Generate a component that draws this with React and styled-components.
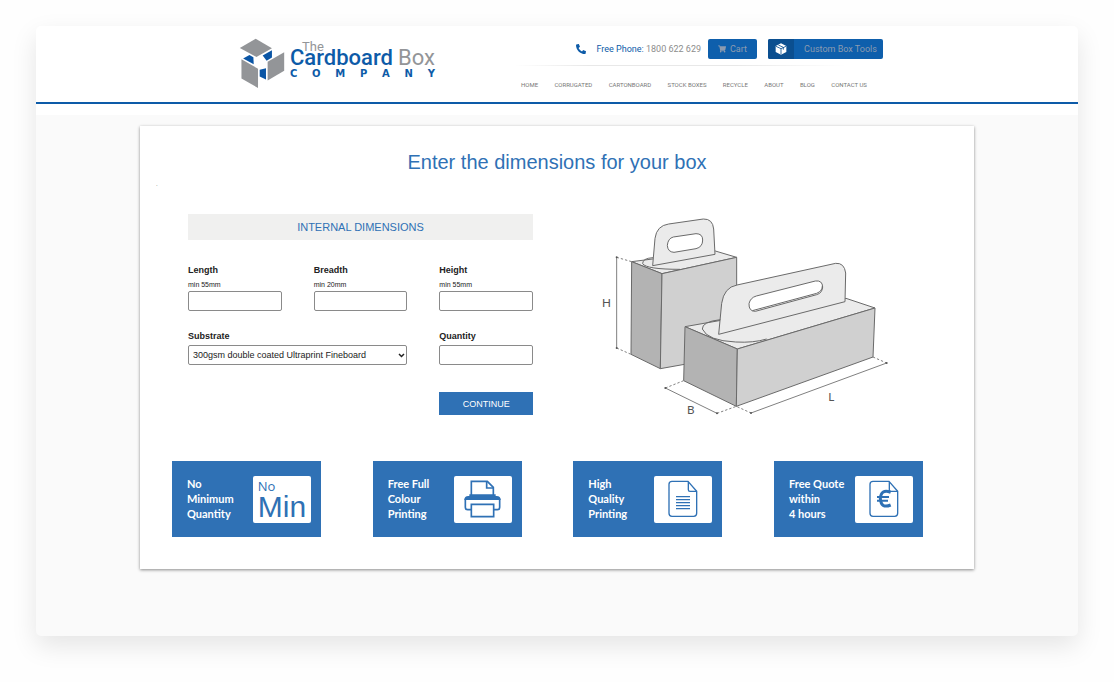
import React, {useState} from "react";
import styled, {createGlobalStyle} from "styled-components";
import {FaPhone, FaShoppingCart} from "react-icons/fa";

const BLUE = '#2f71b5';
const BRAND = '#0d5ba8';

const GlobalStyle = createGlobalStyle`
    * {
        box-sizing: border-box;
    }
    body {
        margin: 0;
        background: #fefefe;
        font-family: "Liberation Sans", Arial, sans-serif;
        color: #222;
    }
`;

const Page = styled.div`
    padding: 26px 36px 46px;
`;

const Window = styled.div`
    background: #fafafa;
    border-radius: 5px;
    overflow: hidden;
    box-shadow: 0 10px 26px rgba(0, 0, 0, 0.1);
`;

const Header = styled.header`
    background: white;
    border-bottom: 2px solid ${BRAND};
`;

const HeaderInner = styled.div`
    display: flex;
    justify-content: space-between;
    max-width: 652px;
    margin: 0 auto;
    padding: 12px 0 12px 8px;
    font-family: Roboto, sans-serif;
`;

const Logo = styled.a`
    display: flex;
    gap: 5px;
    text-decoration: none;

    & svg {
        width: 46px;
        height: 51px;
    }
`;

const Wordmark = styled.div`
    width: 145px;
    padding-top: 3px;
    color: #939598;
`;

// "The" tucks in over the ascenders of the line below
const The = styled.div`
    margin: 0 0 -4px 12px;
    font-size: 13px;
    line-height: 12px;
`;

const CompanyName = styled.div`
    display: flex;
    justify-content: space-between;
    font-size: 22px;
    line-height: 18px;

    & b {
        font-weight: 500;
        color: ${BRAND};
    }
`;

const Spread = styled.div`
    display: flex;
    justify-content: space-between;
    font-family: "DejaVu Sans", sans-serif;
    font-size: 10px;
    font-weight: 700;
    line-height: 13px;
    color: ${BRAND};
`;

const HeaderSide = styled.div`
    display: flex;
    flex-direction: column;
    width: 369px;
`;

const Contact = styled.div`
    display: flex;
    align-items: center;
    justify-content: flex-end;
    height: 20px;
    margin-top: 1px;
`;

const Phone = styled.a`
    display: flex;
    align-items: center;
    margin-right: 7px;
    font-size: 9px;
    color: #8d8d8d;
    text-decoration: none;
    white-space: pre;

    & svg {
        margin-right: 10px;
        color: ${BRAND};
    }
    & b {
        font-weight: 400;
        color: ${BRAND};
    }
`;

const HeaderButton = styled.button`
    display: flex;
    align-items: center;
    justify-content: center;
    gap: 4px;
    width: ${props => props.$width};
    height: 20px;
    margin: 0 0 0 ${props => props.$gap || 0};
    padding: 0;
    overflow: hidden;
    border: 0;
    border-radius: 2px;
    background: #0e5fac;
    color: #8c9bb0;
    font: 9px Roboto, sans-serif;
    cursor: pointer;
`;

const ButtonIcon = styled.span`
    display: flex;
    align-items: center;
    justify-content: center;
    width: 26px;
    height: 20px;
    background: #0b4f90;
`;

const ButtonText = styled.span`
    flex: 1;
    text-align: center;
`;

const Divider = styled.hr`
    width: 100%;
    height: 1px;
    margin: 6px 0 0;
    border: 0;
    background: linear-gradient(90deg, transparent, #e8e8e8 20%, #e8e8e8 60%, transparent 90%);
`;

const Nav = styled.nav`
    display: flex;
    justify-content: space-between;
    padding: 14px 16px 0 7px;

    & a {
        font-size: 6px;
        line-height: 10px;
        color: #777;
        text-decoration: none;
        white-space: nowrap;
    }
`;

const Strip = styled.div`
    height: 11px;
    background: white;
`;

const Card = styled.main`
    max-width: 834px;
    margin: 11px auto 67px;
    padding: 24px 0 32px;
    background: white;
    box-shadow: 0 1px 3px rgba(0, 0, 0, 0.45);
`;

const Title = styled.h1`
    margin: 0;
    font-size: 20px;
    font-weight: 400;
    line-height: 24px;
    text-align: center;
    color: ${BLUE};
`;

const Note = styled.p`
    margin: 4px 16px 0;
    font-size: 6px;
    line-height: 12px;
    color: #555;
`;

const Content = styled.div`
    display: flex;
    align-items: flex-start;
    gap: 57px;
    padding: 15px 48px 0;
`;

const Form = styled.form`
    flex: 0 1 345px;
    padding-top: 9px;
`;

const FormHeading = styled.h2`
    margin: 0 0 24px;
    background: #f0f0ef;
    font-size: 11px;
    font-weight: 400;
    line-height: 26px;
    text-align: center;
    color: ${BLUE};
`;

const Fields = styled.div`
    display: grid;
    grid-template-columns: repeat(3, 1fr);
    gap: 19px 32px;
`;

const Field = styled.div`
    display: flex;
    flex-direction: column;
    grid-column: span ${props => props.$span || 1};
`;

const Label = styled.label`
    margin-bottom: 3px;
    font-size: 9px;
    font-weight: 700;
    line-height: 12px;
`;

const Hint = styled.small`
    font-size: 7px;
    line-height: 12px;
`;

const Input = styled.input`
    width: 100%;
    height: 20px;
    padding: 0 5px;
    border: 1px solid #8a8a8a;
    border-radius: 2px;
    background: white;
    font: 9px "Liberation Sans", Arial, sans-serif;
`;

const SelectBox = styled.div`
    display: grid;
    align-items: center;

    & > * {
        grid-area: 1 / 1;
    }
    & svg {
        justify-self: end;
        margin-right: 2px;
        pointer-events: none;
    }
`;

const Select = styled.select`
    appearance: none;
    width: 100%;
    height: 20px;
    padding: 0 4px;
    border: 1px solid #8a8a8a;
    border-radius: 2px;
    background: white;
    font: 9px "Liberation Sans", Arial, sans-serif;
    color: #222;
`;

const Continue = styled.button`
    grid-column: 3;
    height: 23px;
    margin-top: 8px;
    padding: 0;
    border: 0;
    background: ${BLUE};
    color: white;
    font: 9px "Liberation Sans", Arial, sans-serif;
    cursor: pointer;
`;

const Drawing = styled.svg`
    flex: 0 1 310px;
    min-width: 0;
    font-family: Lato, sans-serif;
`;

const Benefits = styled.ul`
    display: flex;
    justify-content: space-between;
    margin: 36px 0 0;
    padding: 0 51px 0 32px;
    list-style: none;
`;

const Benefit = styled.li`
    display: flex;
    align-items: center;
    justify-content: space-between;
    width: 149px;
    height: 76px;
    padding: 0 10px 0 15px;
    background: ${BLUE};
    color: white;
    font-family: Lato, sans-serif;
    font-size: 11px;
    font-weight: 700;
    line-height: 15px;
    white-space: pre;
`;

const BenefitText = styled.span`
    padding-bottom: 2px;
`;

const Badge = styled.div`
    display: flex;
    align-items: center;
    justify-content: center;
    width: 58px;
    height: 47px;
    border-radius: 2px;
    background: white;
    color: ${BLUE};
`;

const NoMin = styled.div`
    font-family: "Liberation Sans", Arial, sans-serif;
    font-size: 30px;
    font-weight: 400;
    line-height: 27px;

    & small {
        display: block;
        font-family: "Open Sans", sans-serif;
        font-size: 13px;
        line-height: 14px;
    }
`;

const LogoMark = () => (
    <svg viewBox="22 18 138 154">
        <g fill="#939598">
            <path d="M24 48 L72 20 L121 49 L74 75 Z" />
            <path d="M29 82 L79 111 V169 L29 140 Z" />
            <path d="M158 61 V117 L108 146 V90 Z" />
        </g>
        <g fill="#0a55a5">
            <path d="M34 80 L53 69 L65 76 L66 97 Z" />
            <path d="M93 71 L121 55 V77 L105 87 Z" />
            <path d="M84 114 L103 109 V143 L84 134 Z" />
        </g>
    </svg>
);

const BoxIcon = () => (
    <svg width="12" height="12" viewBox="0 0 36 36">
        <path d="M18 1 L34 9 V27 L18 35 L2 27 V9 Z" fill="white" />
        <path d="M3 10 L18 17 L33 10 M18 17 V34 M10 6 L25 13 V20" fill="none" stroke="#0b4f90" strokeWidth="2.5" />
    </svg>
);

const Chevron = () => (
    <svg width="7" height="5" viewBox="0 0 14 10" fill="none" stroke="#222" strokeWidth="3">
        <path d="M2 2 L7 7 L12 2" />
    </svg>
);

const PrinterIcon = () => (
    <svg width="37" height="38" viewBox="0 0 111 114" fill="none" stroke={BLUE} strokeWidth="5">
        <path d="M22 48 V4 H70 L88 22 V48 Z" fill="white" />
        <path d="M68 5 V24 H87" />
        <path d="M16 43 H95 V48 H98 Q110 48 110 60 H1 Q1 48 13 48 H16 Z" fill={BLUE} stroke="none" />
        <path d="M4 56 V82 Q4 89 11 89 H22 M107 56 V82 Q107 89 100 89 H89" />
        <path d="M22 73 H89 V110 H22 Z" fill="white" />
    </svg>
);

const DocumentIcon = ({children}) => (
    <svg width="30" height="38" viewBox="0 0 90 114" fill="none" stroke={BLUE} strokeWidth="4">
        <path d="M12 4 H60 L86 34 V100 Q86 109 77 109 H12 Q3 109 3 100 V13 Q3 4 12 4 Z" />
        <path d="M61 5 V29 Q61 34 66 34 H86" />
        {children}
    </svg>
);

const EuroMark = () => (
    <g strokeWidth="9">
        <path d="M65 37 Q36 26 34 56 Q36 87 65 75" />
        <path d="M24 51 H60 M24 62 H57" strokeWidth="6" />
    </g>
);

const BoxDrawing = () => (
    <Drawing viewBox="0 0 930 660" role="img" aria-label="Box dimensions: height, breadth and length">
        <g stroke="#6a6a6a" strokeWidth="3" strokeLinejoin="round">
            <path d="M125 170 L376 138 L440 157 L216 206 Z" fill="#ebebeb" />
            <path d="M125 170 L216 206 L211 491 L123 448 Z" fill="#b3b3b3" />
            <path d="M216 206 L440 157 V450 L211 491 Z" fill="#d0d0d0" />
            <path d="M188 182 L195 100 Q200 62 236 57 L340 42 Q368 41 371 72 L375 148 Z" fill="#ebebeb" />
            <path d="M250 96 L318 86 Q338 86 338 105 Q338 126 318 131 L252 142 Q233 141 232 121 Q234 100 250 96 Z" fill="white" />
            <path d="M189 158 Q157 160 158 176 Q169 193 270 193" fill="none" />

            <path d="M285 365 L768 280 L855 309 L442 432 Z" fill="#ebebeb" />
            <path d="M285 365 L442 432 L439 604 L281 527 Z" fill="#b3b3b3" />
            <path d="M442 432 L855 309 L849 456 L439 604 Z" fill="#d0d0d0" />
            <path d="M386 388 L395 295 Q402 247 441 240 L737 175 Q763 173 767 204 L765 290 Z" fill="#ebebeb" />
            <path d="M499 273 L676 228 Q697 225 698 246 Q697 264 680 269 L496 319 Q476 319 477 296 Q481 278 499 273 Z" fill="white" />
            <path d="M487 317 L680 265 Q697 258 697 243" fill="none" />
            <path d="M391 344 Q336 350 337 372 Q352 407 437 411 Q490 414 530 402" fill="none" />
        </g>
        <g stroke="#808080" strokeWidth="3" fill="none">
            <path d="M80 157 V429 M226 549 L381 625 M483 624 L890 474" />
            <path d="M80 157 L125 170 M80 429 L123 448 M226 549 L281 527 M381 625 L439 604 L483 624 M849 456 L890 474" strokeDasharray="7 6" />
        </g>
        <g fill="#555">
            <circle cx="80" cy="157" r="3" />
            <circle cx="80" cy="429" r="3" />
            <circle cx="226" cy="549" r="3" />
            <circle cx="381" cy="625" r="3" />
            <circle cx="483" cy="624" r="3" />
            <circle cx="890" cy="474" r="3" />
        </g>
        <g fill="#555" fontSize="35" textAnchor="middle">
            <text x="49" y="305">H</text>
            <text x="302" y="626">B</text>
            <text x="724" y="588">L</text>
        </g>
    </Drawing>
);

const links = ['HOME', 'CORRUGATED', 'CARTONBOARD', 'STOCK BOXES', 'RECYCLE', 'ABOUT', 'BLOG', 'CONTACT US'];

const dimensions = [
    {id: 'length', label: 'Length', hint: 'min 55mm'},
    {id: 'breadth', label: 'Breadth', hint: 'min 20mm'},
    {id: 'height', label: 'Height', hint: 'min 55mm'},
];

const benefits = [
    {text: 'No\nMinimum\nQuantity', icon: <NoMin><small>No</small>Min</NoMin>},
    {text: 'Free Full\nColour\nPrinting', icon: <PrinterIcon />},
    {
        text: 'High\nQuality\nPrinting',
        icon: <DocumentIcon><path d="M24 50 H66 M24 59 H66 M24 68 H66 M24 77 H66 M24 86 H66" /></DocumentIcon>,
    },
    {text: 'Free Quote\nwithin\n4 hours', icon: <DocumentIcon><EuroMark /></DocumentIcon>},
];

const SiteHeader = () => (
    <Header>
        <HeaderInner>
            <Logo href="#">
                <LogoMark />
                <Wordmark>
                    <The>The</The>
                    <CompanyName><b>Cardboard</b><span>Box</span></CompanyName>
                    <Spread>
                        {'COMPANY'.split('').map(v => <span key={v}>{v}</span>)}
                    </Spread>
                </Wordmark>
            </Logo>
            <HeaderSide>
                <Contact>
                    <Phone href="tel:1800622629">
                        <FaPhone size={10} style={{transform: 'scaleX(-1)'}} />
                        <b>Free Phone: </b>1800 622 629
                    </Phone>
                    <HeaderButton type="button" $width="49px"><FaShoppingCart size={8} />Cart</HeaderButton>
                    <HeaderButton type="button" $width="115px" $gap="11px">
                        <ButtonIcon><BoxIcon /></ButtonIcon>
                        <ButtonText>Custom Box Tools</ButtonText>
                    </HeaderButton>
                </Contact>
                <Divider />
                <Nav>
                    {links.map(v => <a key={v} href="#">{v}</a>)}
                </Nav>
            </HeaderSide>
        </HeaderInner>
    </Header>
);

const App = () => {
    const [values, setValues] = useState({length: '', breadth: '', height: '', quantity: ''});
    const onChange = e => setValues({...values, [e.target.id]: e.target.value});

    return (
        <Page>
            <GlobalStyle />
            <Window>
                <SiteHeader />
                <Strip />
                <Card>
                    <Title>Enter the dimensions for your box</Title>
                    <Note>.</Note>
                    <Content>
                        <Form onSubmit={e => e.preventDefault()}>
                            <FormHeading>INTERNAL DIMENSIONS</FormHeading>
                            <Fields>
                                {dimensions.map(v => (
                                    <Field key={v.id}>
                                        <Label htmlFor={v.id}>{v.label}</Label>
                                        <Hint>{v.hint}</Hint>
                                        <Input id={v.id} value={values[v.id]} onChange={onChange} />
                                    </Field>
                                ))}
                                <Field $span={2}>
                                    <Label htmlFor="substrate">Substrate</Label>
                                    <SelectBox>
                                        <Select id="substrate">
                                            <option>300gsm double coated Ultraprint Fineboard</option>
                                        </Select>
                                        <Chevron />
                                    </SelectBox>
                                </Field>
                                <Field>
                                    <Label htmlFor="quantity">Quantity</Label>
                                    <Input id="quantity" value={values.quantity} onChange={onChange} />
                                </Field>
                                <Continue type="submit">CONTINUE</Continue>
                            </Fields>
                        </Form>
                        <BoxDrawing />
                    </Content>
                    <Benefits>
                        {benefits.map(v => (
                            <Benefit key={v.text}>
                                <BenefitText>{v.text}</BenefitText>
                                <Badge>{v.icon}</Badge>
                            </Benefit>
                        ))}
                    </Benefits>
                </Card>
            </Window>
        </Page>
    );
};

export default App;
